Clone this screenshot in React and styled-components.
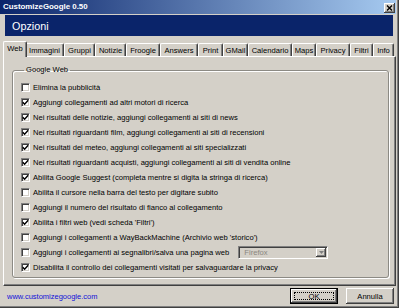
import React from "react";
import styled, { createGlobalStyle } from "styled-components";

const Global = createGlobalStyle`
  html, body { margin: 0; padding: 0; background: #D4D0C8; }
  body { font-family: "Liberation Sans", Arial, sans-serif; }
  * { box-sizing: border-box; }
`;

const Window = styled.div`
  width: 399px;
  height: 308px;
  background: #D4D0C8;
  border-right: 1px solid #404040;
  border-bottom: 1px solid #404040;
  display: flex;
`;

const Frame = styled.div`
  flex: 1;
  display: flex;
  flex-direction: column;
  border-right: 1px solid #808080;
  border-bottom: 1px solid #808080;
  padding: 0 1px 1px 0;
  min-width: 0;
`;

const TitleBar = styled.div`
  height: 14px;
  margin-bottom: 1px;
  display: flex;
  align-items: center;
  justify-content: space-between;
  padding: 0 1px 0 3px;
  background: linear-gradient(to right, #0A246A, #A6CAF0);
`;

const Title = styled.span`
  color: #fff;
  font-weight: bold;
  font-size: 7.9px;
  line-height: 14px;
`;

const CloseButton = styled.div`
  width: 11px;
  height: 10px;
  margin-top: 1px;
  background: #D4D0C8;
  box-shadow: inset -1px -1px #404040, inset 1px 1px #fff, inset -2px -2px #808080;
  display: flex;
  align-items: center;
  justify-content: center;
`;

const Header = styled.div`
  height: 21px;
  margin: 0 3px 0 5px;
  background: #0A246A;
  color: #fff;
  font-size: 10.8px;
  display: flex;
  align-items: center;
  padding-left: 7px;
`;

const TabStrip = styled.div`
  height: 15px;
  margin-top: 5px;
  padding-left: 5px;
  display: flex;
  align-items: flex-end;
  position: relative;
  z-index: 1;
`;

const Tab = styled.div`
  flex: none;
  width: ${(p) => (p.$active ? p.$w + 4 : p.$w)}px;
  height: ${(p) => (p.$active ? 16 : 13)}px;
  margin: ${(p) => (p.$active ? "0 -2px -1px -2px" : "0")};
  background: #D4D0C8;
  border-top: 1px solid #fff;
  border-left: 1px solid #fff;
  border-right: 1px solid #404040;
  border-radius: 2px 2px 0 0;
  box-shadow: inset -1px 0 #808080;
  font-size: 7.6px;
  color: #000;
  display: flex;
  justify-content: center;
  align-items: flex-start;
  padding-top: 2px;
  line-height: 9px;
  white-space: nowrap;
  position: relative;
  z-index: ${(p) => (p.$active ? 2 : 1)};
`;

const Panel = styled.div`
  height: 230px;
  margin-left: 3px;
  border: 1px solid;
  border-color: #fff #404040 #404040 #fff;
  box-shadow: inset -1px -1px #808080;
  display: flex;
  flex-direction: column;
  padding: 8px 6px 7px 8px;
`;

const Group = styled.fieldset`
  flex: 1;
  margin: 0;
  min-width: 0;
  border: 1px solid #8c8a84;
  border-radius: 3px;
  box-shadow: inset 1px 1px #fff, 1px 1px #fff;
  padding: 5px 8px 0 8px;
  display: flex;
  flex-direction: column;
`;

const Legend = styled.legend`
  font-size: 7.6px;
  line-height: 10px;
  padding: 0 2px;
  margin-left: 3px;
  color: #000;
`;

const Row = styled.div`
  height: 15px;
  display: flex;
  align-items: center;
  gap: 3px;
  font-size: 7.6px;
  color: #000;
  white-space: nowrap;
`;

const Box = styled.span`
  flex: none;
  width: 9px;
  height: 9px;
  background: #fff;
  border: 1px solid;
  border-color: #808080 #fff #fff #808080;
  box-shadow: inset 1px 1px #404040, inset -1px -1px #D4D0C8;
  display: flex;
  align-items: center;
  justify-content: center;
`;

const Label = styled.span`
  line-height: 10px;
`;

const Combo = styled.div`
  width: 90px;
  height: 13px;
  margin-left: 6px;
  border: 1px solid;
  border-color: #808080 #fff #fff #808080;
  box-shadow: inset 1px 1px #404040, inset -1px -1px #D4D0C8;
  display: flex;
  align-items: center;
  justify-content: space-between;
  padding: 1px 1px 1px 5px;
  color: #8a8780;
  font-size: 7.6px;
`;

const ComboButton = styled.span`
  width: 10px;
  height: 9px;
  background: #D4D0C8;
  box-shadow: inset -1px -1px #404040, inset 1px 1px #fff, inset -2px -2px #808080;
  display: flex;
  align-items: center;
  justify-content: center;
`;

const Footer = styled.div`
  flex: 1;
  display: flex;
  align-items: center;
  padding: 1px 2px 0 7px;
  gap: 8px;
`;

const Link = styled.a`
  flex: 1;
  color: #1010d8;
  text-decoration: none;
  font-size: 7.5px;
`;

const Button = styled.div`
  width: 48px;
  height: 16px;
  background: #D4D0C8;
  font-size: 7.6px;
  color: #000;
  display: flex;
  align-items: center;
  justify-content: center;
  position: relative;
  border: ${(p) => (p.$default ? "1px solid #000" : "none")};
  box-shadow: inset -1px -1px #404040, inset 1px 1px #fff, inset -2px -2px #808080;
`;

const Focus = styled.span`
  position: absolute;
  inset: 3px;
  border: 1px dotted #000;
`;

const tabs = [
  { label: "Web", w: 20, active: true },
  { label: "Immagini", w: 39 },
  { label: "Gruppi", w: 31 },
  { label: "Notizie", w: 31 },
  { label: "Froogle", w: 34 },
  { label: "Answers", w: 38 },
  { label: "Print", w: 25 },
  { label: "GMail", w: 25 },
  { label: "Calendario", w: 44 },
  { label: "Maps", w: 24 },
  { label: "Privacy", w: 34 },
  { label: "Filtri", w: 23 },
  { label: "Info", w: 21 },
];

const options = [
  { text: "Elimina la pubblicità", on: false },
  { text: "Aggiungi collegamenti ad altri motori di ricerca", on: true },
  { text: "Nei risultati delle notizie, aggiungi collegamenti ai siti di news", on: true },
  { text: "Nei risultati riguardanti film, aggiungi collegamenti ai siti di recensioni", on: true },
  { text: "Nei risultati del meteo, aggiungi collegamenti ai siti specializzati", on: true },
  { text: "Nei risultati riguardanti acquisti, aggiungi collegamenti ai siti di vendita online", on: true },
  { text: "Abilita Google Suggest (completa mentre si digita la stringa di ricerca)", on: true },
  { text: "Abilita il cursore nella barra del testo per digitare subito", on: false },
  { text: "Aggiungi il numero del risultato di fianco al collegamento", on: false },
  { text: "Abilita i filtri web (vedi scheda 'Filtri')", on: true },
  { text: "Aggiungi i collegamenti a WayBackMachine (Archivio web 'storico')", on: false },
  { text: "Aggiungi i collegamenti ai segnalibri/salva una pagina web", on: false, combo: true },
  { text: "Disabilita il controllo dei collegamenti visitati per salvaguardare la privacy", on: true },
];

const Check = () => (
  <svg width="7" height="7" viewBox="0 0 7 7">
    <polyline points="0.8,3.2 2.6,5.2 6.2,1.2" fill="none" stroke="#000" strokeWidth="1.4" />
  </svg>
);

export default function App() {
  return (
    <>
      <Global />
      <Window>
        <Frame>
          <TitleBar>
            <Title>CustomizeGoogle 0.50</Title>
            <CloseButton>
              <svg width="7" height="6" viewBox="0 0 7 6">
                <path d="M1 0.5 L6 5.5 M6 0.5 L1 5.5" stroke="#000" strokeWidth="1.4" />
              </svg>
            </CloseButton>
          </TitleBar>
          <Header>Opzioni</Header>
          <TabStrip>
            {tabs.map((t) => (
              <Tab key={t.label} $w={t.w} $active={t.active}>
                {t.label}
              </Tab>
            ))}
          </TabStrip>
          <Panel>
            <Group>
              <Legend>Google Web</Legend>
              {options.map((o) => (
                <Row key={o.text}>
                  <Box>{o.on && <Check />}</Box>
                  <Label>{o.text}</Label>
                  {o.combo && (
                    <Combo>
                      <span>Firefox</span>
                      <ComboButton>
                        <svg width="5" height="3" viewBox="0 0 5 3">
                          <path d="M0 0 H5 L2.5 3 Z" fill="#808080" />
                        </svg>
                      </ComboButton>
                    </Combo>
                  )}
                </Row>
              ))}
            </Group>
          </Panel>
          <Footer>
            <Link href="#">www.customizegoogle.com</Link>
            <Button $default>
              <Focus />
              OK
            </Button>
            <Button>Annulla</Button>
          </Footer>
        </Frame>
      </Window>
    </>
  );
}
